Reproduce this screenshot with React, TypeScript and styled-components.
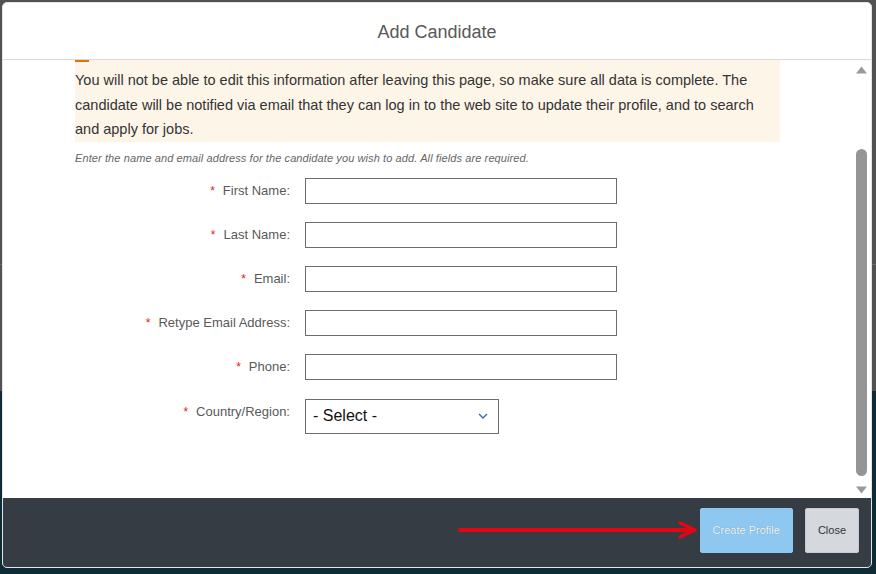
import React from "react";
import styled, { createGlobalStyle } from "styled-components";

/**
 * Add candidate dialog over a dimmed page
 */

const GlobalStyle = createGlobalStyle`
  html, body {
    margin: 0;
    padding: 0;
    height: 100%;
  }
  body {
    font-family: "Liberation Sans", Arial, sans-serif;
    background:
      linear-gradient(
        to bottom,
        #525252 0,
        #525252 264px,
        #6b6b6b 264px,
        #6b6b6b 265px,
        #525252 265px,
        #525252 391px,
        #0e2c35 391px,
        #0e2c35 100%
      );
  }
`;

const Page = styled.div`
  width: 876px;
  height: 574px;
  padding: 2px 4px 6px 2px;
  box-sizing: border-box;
`;

const Dialog = styled.div`
  width: 870px;
  height: 566px;
  display: flex;
  flex-direction: column;
  border: 1px solid #e4e4e4;
  border-radius: 5px;
  overflow: hidden;
  background: #ffffff;
  box-sizing: border-box;
`;

const Header = styled.div`
  height: 57px;
  flex: none;
  display: flex;
  align-items: center;
  justify-content: center;
  padding-top: 2px;
  box-sizing: border-box;
  border-bottom: 1px solid #d9d9d9;
  font-size: 18px;
  color: #595959;
`;

const Body = styled.div`
  flex: 1;
  display: flex;
  min-height: 0;
`;

const Content = styled.div`
  flex: 1;
  padding-left: 72px;
  overflow: hidden;
`;

const Notice = styled.div`
  width: 705px;
  background: #fef5e9;
  padding: 8px 0 0 0;
  position: relative;
  font-size: 14.5px;
  line-height: 24.5px;
  color: #333333;
  box-sizing: border-box;

  &::before {
    content: "";
    position: absolute;
    left: 0;
    top: 0;
    width: 14px;
    height: 2px;
    background: #d9730d;
  }
`;

const Hint = styled.div`
  margin-top: 10px;
  font-size: 11px;
  line-height: 13px;
  font-style: italic;
  color: #666666;
  letter-spacing: 0.1px;
`;

const Form = styled.div`
  margin-top: 13px;
  display: grid;
  grid-template-columns: 215px auto;
  column-gap: 15px;
  row-gap: 18px;
  align-items: center;
  justify-content: start;
`;

const Label = styled.div<{ $top?: boolean }>`
  text-align: right;
  font-size: 13px;
  color: #595959;
  align-self: ${(p) => (p.$top ? "start" : "center")};
  padding-top: ${(p) => (p.$top ? "6px" : "0")};
`;

const Star = styled.span`
  color: #e0201b;
  margin-right: 8px;
  font-size: 12px;
`;

const Input = styled.div`
  width: 312px;
  height: 26px;
  border: 1px solid #6a6d70;
  box-sizing: border-box;
  background: #ffffff;
`;

const Select = styled.div`
  width: 194px;
  height: 35px;
  margin-top: 1px;
  border: 1px solid #6a6d70;
  box-sizing: border-box;
  display: flex;
  align-items: center;
  justify-content: space-between;
  padding: 0 10px 0 7px;
  font-size: 16px;
  color: #111111;
`;

const Scrollbar = styled.div`
  width: 17px;
  flex: none;
  display: flex;
  flex-direction: column;
  align-items: center;
  padding: 6px 2px 4px 0;
  box-sizing: border-box;
`;

const Thumb = styled.div`
  width: 11px;
  flex: 1;
  margin: 75px 0 10px;
  border-radius: 6px;
  background: #959595;
`;

const Footer = styled.div`
  height: 69px;
  flex: none;
  background: #363c44;
  display: flex;
  align-items: center;
  justify-content: flex-end;
  padding: 0 12px 5px 0;
  gap: 12px;
  box-sizing: border-box;
`;

const Arrow = styled.svg`
  margin-right: -10px;
`;

const Button = styled.button<{ $primary?: boolean }>`
  height: 45px;
  padding: 0 12px;
  border-radius: 2px;
  font-family: "Liberation Sans", Arial, sans-serif;
  font-size: 11px;
  border: 1px solid ${(p) => (p.$primary ? "#8ec8f0" : "#c5cad0")};
  background: ${(p) => (p.$primary ? "#8ec8f0" : "#d5d9de")};
  color: ${(p) => (p.$primary ? "#eef5fb" : "#32363a")};
  text-shadow: ${(p) => (p.$primary ? "0 0 1px #6a8aa0" : "none")};
`;

const fields = [
  "First Name:",
  "Last Name:",
  "Email:",
  "Retype Email Address:",
  "Phone:",
];

const App: React.FC = () => {
  return (
    <>
      <GlobalStyle />
      <Page>
        <Dialog>
          <Header>Add Candidate</Header>
          <Body>
            <Content>
              <Notice>
                You will not be able to edit this information after leaving this
                page, so make sure all data is complete. The candidate will be
                notified via email that they can log in to the web site to update
                their profile, and to search and apply for jobs.
              </Notice>
              <Hint>
                Enter the name and email address for the candidate you wish to
                add. All fields are required.
              </Hint>
              <Form>
                {fields.map((f) => (
                  <React.Fragment key={f}>
                    <Label>
                      <Star>*</Star>
                      {f}
                    </Label>
                    <Input />
                  </React.Fragment>
                ))}
                <Label $top>
                  <Star>*</Star>
                  Country/Region:
                </Label>
                <Select>
                  <span>- Select -</span>
                  <svg width="10" height="6" viewBox="0 0 10 6">
                    <path
                      d="M1 1 L5 5 L9 1"
                      fill="none"
                      stroke="#2a6cb3"
                      strokeWidth="1.3"
                    />
                  </svg>
                </Select>
              </Form>
            </Content>
            <Scrollbar>
              <svg width="11" height="8" viewBox="0 0 11 8">
                <path d="M5.5 0.5 L11 7.5 L0 7.5 Z" fill="#999999" />
              </svg>
              <Thumb />
              <svg width="11" height="8" viewBox="0 0 11 8">
                <path d="M0 0.5 L11 0.5 L5.5 7.5 Z" fill="#999999" />
              </svg>
            </Scrollbar>
          </Body>
          <Footer>
            <Arrow width="240" height="20" viewBox="0 0 240 20">
              <path
                d="M2 10 L232 10"
                stroke="#e30613"
                strokeWidth="4"
                strokeLinecap="round"
              />
              <path
                d="M222 3 L237 10 L222 17"
                fill="none"
                stroke="#e30613"
                strokeWidth="3.5"
                strokeLinecap="round"
                strokeLinejoin="round"
              />
            </Arrow>
            <Button $primary>Create Profile</Button>
            <Button>Close</Button>
          </Footer>
        </Dialog>
      </Page>
    </>
  );
};

export default App;
